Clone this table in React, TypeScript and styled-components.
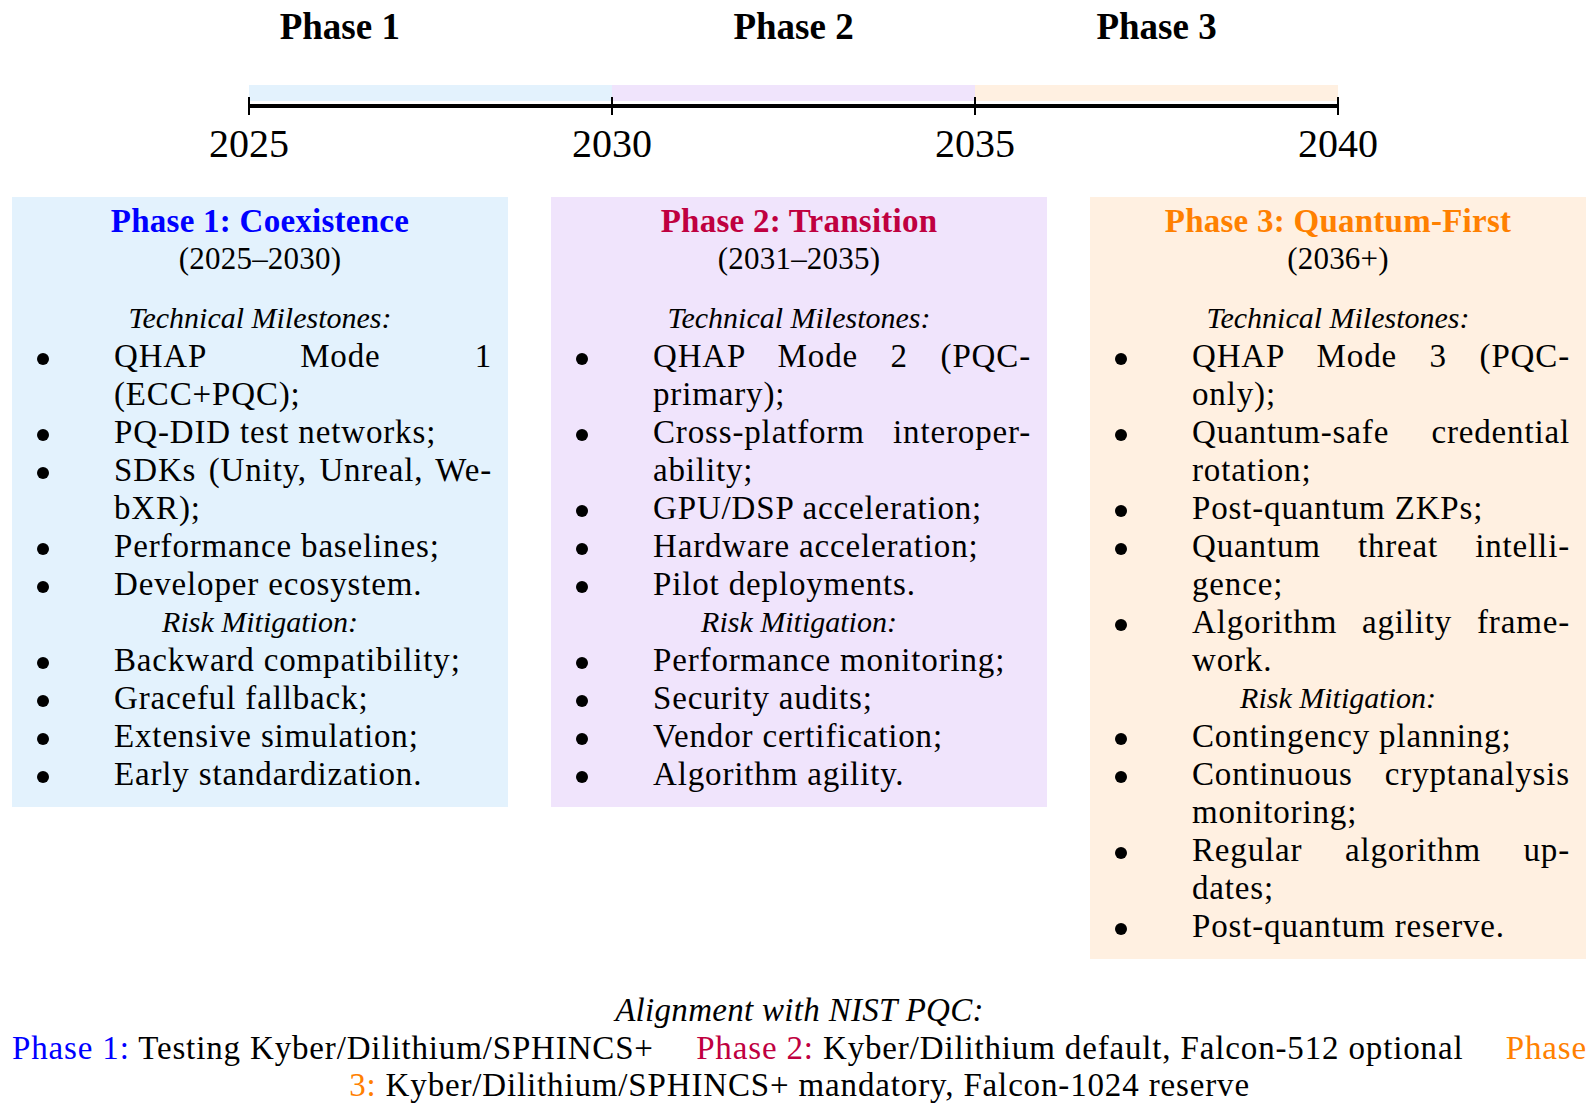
import React from 'react'
import styled, { createGlobalStyle } from 'styled-components'

type Tone = 'blue' | 'purple' | 'orange'

const ink: Record<Tone, string> = {
  blue: '#0000ff',
  purple: '#bf0040',
  orange: '#ff8000',
}

const tint: Record<Tone, string> = {
  blue: '#e3f2fd',
  purple: '#f0e4fc',
  orange: '#fff0e1',
}

type Phase = {
  tone: Tone
  title: string
  span: string
  technical: string[][]
  risk: string[][]
}

const phases: Phase[] = [
  {
    tone: 'blue',
    title: 'Phase 1: Coexistence',
    span: '(2025–2030)',
    technical: [
      ['QHAP Mode 1', '(ECC+PQC);'],
      ['PQ-DID test networks;'],
      ['SDKs (Unity, Unreal, We-', 'bXR);'],
      ['Performance baselines;'],
      ['Developer ecosystem.'],
    ],
    risk: [
      ['Backward compatibility;'],
      ['Graceful fallback;'],
      ['Extensive simulation;'],
      ['Early standardization.'],
    ],
  },
  {
    tone: 'purple',
    title: 'Phase 2: Transition',
    span: '(2031–2035)',
    technical: [
      ['QHAP Mode 2 (PQC-', 'primary);'],
      ['Cross-platform interoper-', 'ability;'],
      ['GPU/DSP acceleration;'],
      ['Hardware acceleration;'],
      ['Pilot deployments.'],
    ],
    risk: [
      ['Performance monitoring;'],
      ['Security audits;'],
      ['Vendor certification;'],
      ['Algorithm agility.'],
    ],
  },
  {
    tone: 'orange',
    title: 'Phase 3: Quantum-First',
    span: '(2036+)',
    technical: [
      ['QHAP Mode 3 (PQC-', 'only);'],
      ['Quantum-safe credential', 'rotation;'],
      ['Post-quantum ZKPs;'],
      ['Quantum threat intelli-', 'gence;'],
      ['Algorithm agility frame-', 'work.'],
    ],
    risk: [
      ['Contingency planning;'],
      ['Continuous cryptanalysis', 'monitoring;'],
      ['Regular algorithm up-', 'dates;'],
      ['Post-quantum reserve.'],
    ],
  },
]

// positions on the axis, as a share of 2025–2040
const years = ['2025', '2030', '2035', '2040']
const markers = [
  { label: 'Phase 1', at: 1.25 / 15 },
  { label: 'Phase 2', at: 7.5 / 15 },
  { label: 'Phase 3', at: 12.5 / 15 },
]

const Bullets = ({ items }: { items: string[][] }) => (
  <>
    {items.map((lines) => (
      <Item key={lines[0]}>
        <Dot />
        <ItemText>
          {lines.map((line, i) => (
            <Line key={line} $fill={i < lines.length - 1}>
              {line}
            </Line>
          ))}
        </ItemText>
      </Item>
    ))}
  </>
)

const App = () => (
  <>
    <GlobalStyle />
    <Page>
      <Timeline>
        <Axis>
          {markers.map((m) => (
            <PhaseMarker key={m.label} style={{ left: `${m.at * 100}%` }}>
              {m.label}
            </PhaseMarker>
          ))}
          <Bands>
            <Band $tone="blue" />
            <Band $tone="purple" />
            <Band $tone="orange" />
          </Bands>
          <AxisLine />
          {years.map((y, i) => (
            <React.Fragment key={y}>
              <Tick style={{ left: `${(i / 3) * 100}%` }} />
              <Year style={{ left: `${(i / 3) * 100}%` }}>{y}</Year>
            </React.Fragment>
          ))}
        </Axis>
      </Timeline>

      <BoxRow>
        {phases.map((p) => (
          <Box key={p.title} $tone={p.tone}>
            <BoxTitle $tone={p.tone}>{p.title}</BoxTitle>
            <BoxSpan>{p.span}</BoxSpan>
            <SectionHead $first>Technical Milestones:</SectionHead>
            <Bullets items={p.technical} />
            <SectionHead>Risk Mitigation:</SectionHead>
            <Bullets items={p.risk} />
          </Box>
        ))}
      </BoxRow>

      <Caption>
        <CaptionTitle>Alignment with NIST PQC:</CaptionTitle>
        <CaptionRow>
          <span>
            <Tag $tone="blue">Phase 1:</Tag> Testing Kyber/Dilithium/SPHINCS+
          </span>
          <span>
            <Tag $tone="purple">Phase 2:</Tag> Kyber/Dilithium default, Falcon-512 optional
          </span>
          <Tag $tone="orange">Phase</Tag>
        </CaptionRow>
        <CaptionLast>
          <Tag $tone="orange">3:</Tag> Kyber/Dilithium/SPHINCS+ mandatory, Falcon-1024 reserve
        </CaptionLast>
      </Caption>
    </Page>
  </>
)

export default App

const GlobalStyle = createGlobalStyle`
  html, body {
    margin: 0;
    padding: 0;
    background: #ffffff;
  }
  body {
    font-family: "Liberation Serif", "Times New Roman", serif;
    color: #000000;
  }
`

const Page = styled.div`
  width: 1596px;
  min-height: 1116px;
`

/* timeline */

const Timeline = styled.div`
  height: 197px;
`

const Axis = styled.div`
  position: relative;
  margin-left: 249px;
  width: 1089px;
  height: 197px;
  padding-top: 85px;
  box-sizing: border-box;
  display: flex;
  flex-direction: column;
  gap: 3px;
`

const PhaseMarker = styled.div`
  position: absolute;
  top: 8px;
  transform: translateX(-50%);
  font-size: 37px;
  line-height: 37px;
  font-weight: bold;
  white-space: nowrap;
`

const Bands = styled.div`
  display: flex;
  height: 16px;
`

const Band = styled.div<{ $tone: Tone }>`
  flex: 1;
  background: ${(p) => tint[p.$tone]};
`

const AxisLine = styled.div`
  height: 3.5px;
  background: #000000;
`

const Tick = styled.div`
  position: absolute;
  top: 97px;
  width: 1.5px;
  height: 18px;
  margin-left: -0.75px;
  background: #000000;
`

const Year = styled.div`
  position: absolute;
  top: 124px;
  transform: translateX(-50%);
  font-size: 40px;
  line-height: 40px;
`

/* phase boxes */

const BoxRow = styled.div`
  display: flex;
  align-items: flex-start;
  gap: 43px;
  padding-left: 12px;
`

const Box = styled.div<{ $tone: Tone }>`
  width: 496px;
  flex: none;
  background: ${(p) => tint[p.$tone]};
  padding: 5px 0 14px;
  display: flex;
  flex-direction: column;
  font-size: 33px;
  line-height: 38px;
`

const BoxTitle = styled.div<{ $tone: Tone }>`
  text-align: center;
  font-weight: bold;
  letter-spacing: 0.25px;
  color: ${(p) => ink[p.$tone]};
`

const BoxSpan = styled.div`
  text-align: center;
  font-size: 31px;
  letter-spacing: 0.2px;
`

const SectionHead = styled.div<{ $first?: boolean }>`
  text-align: center;
  font-style: italic;
  font-size: 30px;
  margin-top: ${(p) => (p.$first ? '21px' : '0')};
`

const Item = styled.div`
  display: grid;
  grid-template-columns: 102px 1fr;
  padding-right: 16px;
`

const Dot = styled.span`
  align-self: start;
  width: 12px;
  height: 12px;
  margin: 16px 0 0 24.5px;
  border-radius: 50%;
  background: #000000;
`

const ItemText = styled.div`
  letter-spacing: 0.85px;
`

const Line = styled.div<{ $fill: boolean }>`
  text-align: ${(p) => (p.$fill ? 'justify' : 'left')};
  text-align-last: ${(p) => (p.$fill ? 'justify' : 'auto')};
`

/* caption */

const Caption = styled.div`
  margin-top: 33px;
  padding: 0 9px 0 12px;
  font-size: 33px;
  line-height: 37.5px;
  letter-spacing: 0.85px;
`

const CaptionTitle = styled.div`
  text-align: center;
  font-style: italic;
  letter-spacing: 0.3px;
`

const CaptionRow = styled.div`
  display: flex;
  justify-content: space-between;
  white-space: nowrap;
`

const CaptionLast = styled.div`
  text-align: center;
`

const Tag = styled.span<{ $tone: Tone }>`
  color: ${(p) => ink[p.$tone]};
`
